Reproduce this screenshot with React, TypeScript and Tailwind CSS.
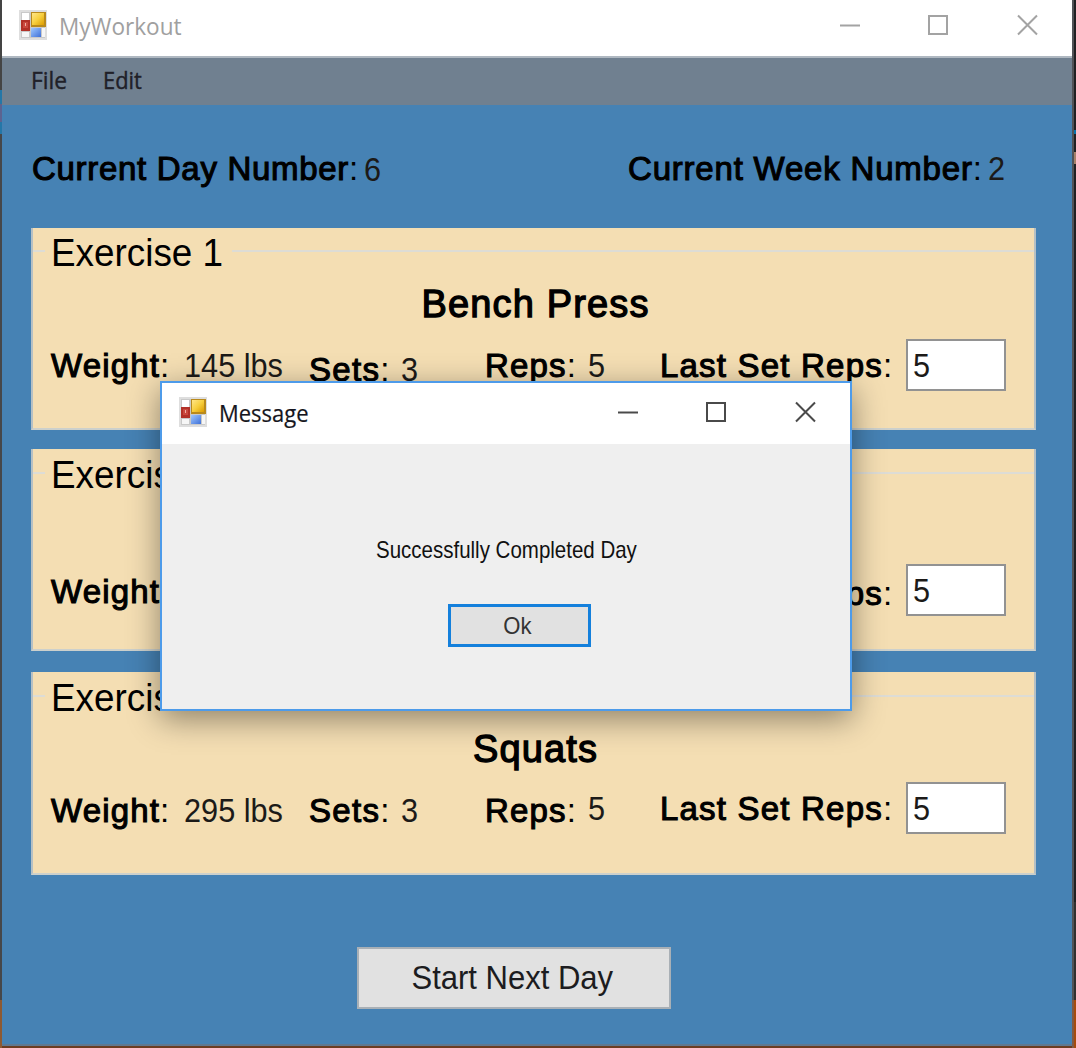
import React from "react";

const label =
  "inline-block whitespace-pre text-[33px] leading-[36px] text-black [-webkit-text-stroke:1.1px_black]";
const thin = "[-webkit-text-stroke:0px]";
const value =
  "inline-block origin-left whitespace-pre text-[33px] leading-[36px] text-[#1c1a18] scale-x-[0.93]";

function FormIcon() {
  return (
    <svg width="28" height="30" viewBox="0 0 28 30" shapeRendering="crispEdges">
      <defs>
        <linearGradient id="gold" x1="0" y1="0" x2="1" y2="1">
          <stop offset="0" stopColor="#ffe58a" />
          <stop offset="0.5" stopColor="#f7cf3e" />
          <stop offset="1" stopColor="#dc9c00" />
        </linearGradient>
        <linearGradient id="sky" x1="0" y1="0" x2="1" y2="1">
          <stop offset="0" stopColor="#9fc8ff" />
          <stop offset="1" stopColor="#3f70d8" />
        </linearGradient>
      </defs>
      <rect width="28" height="30" fill="#dedede" />
      <rect x="2" y="2" width="24" height="26" fill="#c9c9c9" />
      <rect x="3" y="3" width="7" height="7" fill="#fff" />
      <rect x="3" y="22" width="7" height="5" fill="#f6f6f6" />
      <rect x="23" y="18" width="3" height="9" fill="#f6f6f6" />
      <rect x="2" y="10" width="9" height="11" fill="#b23128" />
      <rect x="4" y="12" width="5" height="6" fill="#c9483e" />
      <rect x="6" y="13" width="1" height="3" fill="#f0b0a4" />
      <rect x="12" y="2" width="15" height="15" fill="#b98a1c" />
      <rect x="13" y="3" width="12" height="12" fill="url(#gold)" />
      <rect x="12" y="18" width="10" height="9" fill="url(#sky)" />
    </svg>
  );
}

function WindowButtons({ color }: { color: string }) {
  return (
    <svg width="200" height="24" viewBox="0 0 200 24" fill="none" stroke={color} strokeWidth="2">
      <path d="M0 12.5H20" />
      <rect x="89" y="3" width="18" height="18" />
      <path d="M178 2.500L197 21.500M197 2.500L178 21.500" />
    </svg>
  );
}

type Exercise = {
  title: string;
  name: string;
  weight: string;
  box: string;
  nameGap: string;
  row: string;
  weightPad: string;
  setsPad: string;
  repsPad: string;
  repsValuePad: string;
  lastPad: string;
};

const exercises: Exercise[] = [
  { title: "Exercise 1", name: "Bench Press", weight: "145 lbs", box: "mt-[28px] h-[202px] pt-[4px]", nameGap: "mt-[9px]", row: "mt-[14px]", weightPad: "pt-[9px]", setsPad: "pt-[13px]", repsPad: "pt-[9px]", repsValuePad: "pt-[9px]", lastPad: "pt-[9px]" },
  { title: "Exercise 2", name: "", weight: "95 lbs", box: "mt-[19px] h-[202px] pt-[5px]", nameGap: "mt-[9px]", row: "mt-[17px]", weightPad: "pt-[10px]", setsPad: "pt-[13px]", repsPad: "pt-[9px]", repsValuePad: "pt-[9px]", lastPad: "pt-[12px]" },
  { title: "Exercise 3", name: "Squats", weight: "295 lbs", box: "mt-[21px] h-[203px] pt-[5px]", nameGap: "mt-[9px]", row: "mt-[12px]", weightPad: "pt-[11px]", setsPad: "pt-[11px]", repsPad: "pt-[11px]", repsValuePad: "pt-[9px]", lastPad: "pt-[9px]" },
];

function Group({ e }: { e: Exercise }) {
  return (
    <section
      className={`${e.box} w-[1005px] overflow-hidden border-x-2 border-b-2 border-x-[#b6c0c4] border-b-[#ccd0cc] bg-[#f4deb3]`}
    >
      <div className="flex h-[42px] items-center">
        <div className="h-[2px] w-[12px] -translate-y-[2px] bg-[#dddcd5]" />
        <h2 className="ml-[6px] w-[181px] whitespace-pre text-[38px] leading-[42px] text-black">
          <span className="inline-block origin-left scale-x-[0.97]">{e.title}</span>
        </h2>
        <div className="h-[2px] flex-1 -translate-y-[2px] bg-[#dddcd5]" />
      </div>
      <h3 className={`${e.nameGap} h-[42px] pl-[4px] text-center text-[38px] leading-[42px] tracking-[1.15px] text-black [-webkit-text-stroke:1.3px_black]`}>
        {e.name}
      </h3>
      <div className={`${e.row} grid grid-cols-[133px_125px_92px_84px_103px_72px_246px_100px] pl-[18px]`}>
        <div className={e.weightPad}><span className={`${label} tracking-[1.15px]`}>Weight<span className={thin}>:</span></span></div>
        <div className={e.weightPad}><span className={value}>{e.weight}</span></div>
        <div className={e.setsPad}><span className={`${label} tracking-[1.3px]`}>Sets<span className={thin}>:</span></span></div>
        <div className={e.setsPad}><span className={value}>3</span></div>
        <div className={e.repsPad}><span className={`${label} tracking-[1.15px]`}>Reps<span className={thin}>:</span></span></div>
        <div className={e.repsValuePad}><span className={value}>5</span></div>
        <div className={e.lastPad}><span className={`${label} tracking-[1.2px]`}>Last Set Reps<span className={thin}>:</span></span></div>
        <div className="h-[52px] w-[100px] border-2 border-[#929292] bg-white pl-[5px] pt-[7px]">
          <span className={value}>5</span>
        </div>
      </div>
    </section>
  );
}

export default function App() {
  return (
    <div className="relative flex h-[1048px] w-[1076px] overflow-hidden bg-[#46474a] font-['Liberation_Sans',sans-serif]">
      <div className="flex w-[2px] shrink-0 flex-col">
        <div className="h-[90px] bg-[#444]" />
        <div className="h-[14px] bg-[#2477a8]" />
        <div className="h-[18px] bg-[#5c6390]" />
        <div className="h-[12px] bg-[#2477a8]" />
        <div className="flex-1 bg-[#46474a]" />
        <div className="h-[48px] bg-[#8d5932]" />
      </div>

      <div className="flex w-[1070px] shrink-0 flex-col">
        <header className="flex h-[56px] shrink-0 items-start bg-white">
          <div className="ml-[17px] mt-[10px]"><FormIcon /></div>
          <div className="ml-[12px] mt-[10px] w-[768px]">
            <span className="inline-block origin-left scale-x-[0.94] font-['Open_Sans',sans-serif] text-[24px] leading-[32px] text-[#a0a0a0]">MyWorkout</span>
          </div>
          <div className="ml-[13px] mt-[13px]"><WindowButtons color="#a3a3a3" /></div>
        </header>
        <nav className="flex h-[49px] shrink-0 border-t-2 border-[#afb8c1] bg-[#708090] pl-[29px] font-['Open_Sans',sans-serif] text-[24px] text-[#202028] [-webkit-text-stroke:0.4px_#202028]">
          <div className="w-[72px] pt-[4px]"><span className="inline-block origin-left scale-x-[0.95] leading-[32px]">File</span></div>
          <div className="pt-[4px]"><span className="inline-block origin-left scale-x-[0.91] leading-[32px]">Edit</span></div>
        </nav>

        <main className="h-[941px] border-b-2 border-[#5f7890] bg-[#4682b4] pl-[29px] pt-[46px]">
          <div className="flex h-[49px] pl-[1px]">
            <div className="w-[332px]"><span className={`${label} tracking-[0.7px]`}>Current Day Number<span className={thin}>:</span></span></div>
            <div className="w-[264px] pt-[1px]"><span className={value}>6</span></div>
            <div className="w-[360px]"><span className={`${label} tracking-[0.8px]`}>Current Week Number<span className={thin}>:</span></span></div>
            <div><span className={value}>2</span></div>
          </div>
          {exercises.map((e) => (
            <Group key={e.title} e={e} />
          ))}
          <button className="ml-[326px] mt-[72px] flex h-[62px] w-[314px] items-center justify-center border-2 border-[#a9b0b6] bg-[#e1e1e1]">
            <span className="inline-block -translate-x-[2px] scale-x-[0.94] whitespace-pre text-[33px] leading-[36px] text-[#1c1c20]">Start Next Day</span>
          </button>
        </main>
        <div className="h-[2px] bg-[#6b3c22]" />
      </div>

      <div className="flex w-[2px] shrink-0 flex-col">
        <div className="h-[1000px] bg-[#515357]" />
        <div className="flex-1 bg-[#805a45]" />
      </div>
      <div className="flex w-[2px] shrink-0 flex-col">
        <div className="h-[130px] bg-[#202123]" />
        <div className="h-[4px] bg-[#0870a8]" />
        <div className="h-[18px] bg-[#202123]" />
        <div className="h-[12px] bg-[#a58069]" />
        <div className="h-[738px] bg-[#202123]" />
        <div className="h-[98px] bg-[#303030]" />
        <div className="flex-1 bg-[#a64b0d]" />
      </div>

      <div
        role="dialog"
        className="absolute left-[160px] top-[381px] flex h-[330px] w-[692px] flex-col border-2 border-[#4d9bea] bg-[#efefef] shadow-[0_8px_30px_rgba(0,0,0,0.42)]"
      >
        <div className="flex h-[61px] shrink-0 bg-white">
          <div className="ml-[17px] mt-[14px]"><FormIcon /></div>
          <div className="ml-[12px] mt-[14px] w-[399px]">
            <span className="inline-block origin-left scale-x-[0.915] font-['Open_Sans',sans-serif] text-[24px] leading-[32px] text-[#151520] [-webkit-text-stroke:0.2px_#151520]">Message</span>
          </div>
          <div className="mt-[17px]"><WindowButtons color="#4a4a4a" /></div>
        </div>
        <div className="pl-[214px] pt-[92px]">
          <span className="inline-block origin-left scale-x-[0.854] whitespace-pre text-[24px] leading-[28px] text-[#111]">Successfully Completed Day</span>
        </div>
        <button className="ml-[286px] mt-[39px] flex h-[43px] w-[143px] items-center justify-center border-[3px] border-[#1480dc] bg-[#e1e1e1]">
          <span className="inline-block -translate-x-[2px] scale-x-[0.92] text-[24px] leading-[28px] text-[#333]">Ok</span>
        </button>
      </div>
    </div>
  );
}
